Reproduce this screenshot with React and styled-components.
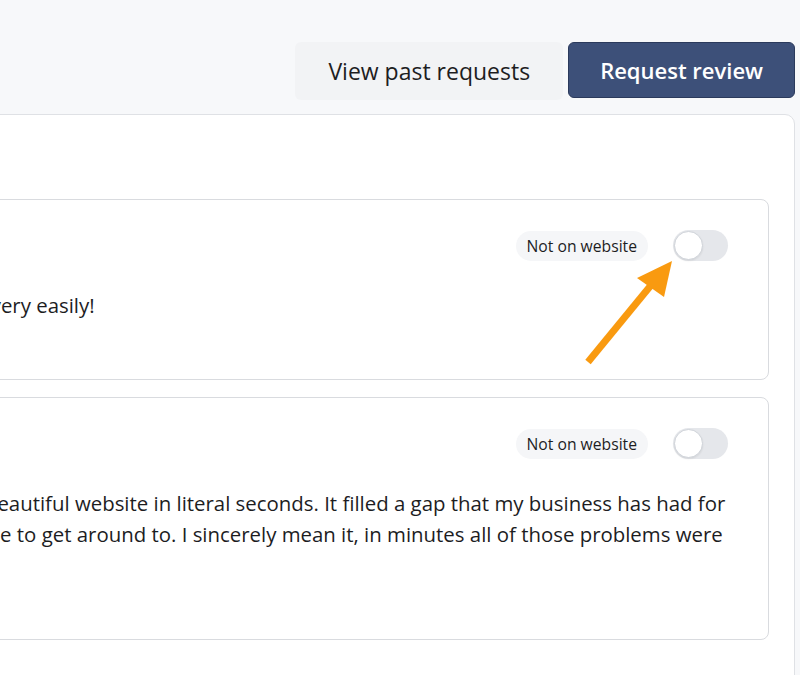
import React from "react";
import styled, { createGlobalStyle } from "styled-components";

const GlobalStyle = createGlobalStyle`
  body {
    margin: 0;
    background: #f7f8fa;
    font-family: "Open Sans", "Noto Sans", sans-serif;
    color: #1d1d1f;
    overflow: hidden;
  }
`;

const Page = styled.div`
  position: relative;
  height: 675px;
  overflow: hidden;
`;

const TopBar = styled.div`
  display: flex;
  justify-content: flex-end;
  align-items: flex-start;
  gap: 5px;
  padding: 42px 5px 14px 0;
`;

const TopButton = styled.button`
  font-family: "Open Sans", sans-serif;
  font-size: ${(props) => (props.type === "filled" ? "22px" : "23px")};
  padding: 0 ${(props) => (props.type === "filled" ? "31px" : "33px")};
  height: ${(props) => (props.type === "filled" ? "56px" : "58px")};
  border-radius: 6px;
  cursor: pointer;
  border: ${(props) =>
    props.type === "filled" ? "1px solid #2b3a5c" : "none"};
  background-color: ${(props) =>
    props.type === "filled" ? "#3d5079" : "#f2f3f5"};
  color: ${(props) => (props.type === "filled" ? "#ffffff" : "#1d1d1f")};
  font-weight: ${(props) => (props.type === "filled" ? 600 : 400)};
`;

const Panel = styled.div`
  margin-left: -212px;
  margin-right: 5px;
  min-height: 640px;
  background: #ffffff;
  border: 1px solid #dfe1e5;
  border-radius: 10px 10px 0 0;
  padding: 84px 25px 40px;
  display: flex;
  flex-direction: column;
  gap: 17px;
`;

const Card = styled.div`
  border: 1px solid #d9dbdf;
  border-radius: 8px;
  padding: 30px 40px 59px 40px;
  background: #ffffff;
`;

const CardHeader = styled.div`
  display: flex;
  justify-content: flex-end;
  align-items: center;
  gap: 25px;
  margin-bottom: 29px;
`;

const Pill = styled.span`
  display: inline-flex;
  align-items: center;
  height: 30px;
  padding: 0 11px;
  border-radius: 15px;
  background: #f5f6f8;
  font-size: 15.7px;
  color: #1d1d1f;
`;

const Track = styled.div`
  width: 55px;
  height: 31px;
  border-radius: 16px;
  background: ${(props) => (props.on ? "#3d5079" : "#e5e7eb")};
  display: flex;
  align-items: center;
  padding: 0 1px;
  box-sizing: border-box;
`;

const Knob = styled.div`
  width: 27px;
  height: 27px;
  border-radius: 50%;
  background: #ffffff;
  border: 1px solid #cfd3d9;
  box-shadow: 0 1px 2px rgba(0, 0, 0, 0.08);
`;

const ReviewText = styled.p`
  margin: 0;
  font-size: 20.4px;
  line-height: 30.4px;
  color: #1d1d1f;
`;

const Arrow = styled.svg`
  position: absolute;
  left: 0;
  top: 0;
  pointer-events: none;
`;

const reviews = [
  { id: 1, text: "He set this up very easily!" },
  {
    id: 2,
    text:
      "It made me a beautiful website in literal seconds. It filled a gap that my business has had for months, no time to get around to. I sincerely mean it, in minutes all of those problems were gone.",
  },
];

const App = () => {
  return (
    <Page>
      <GlobalStyle />
      <TopBar>
        <TopButton>View past requests</TopButton>
        <TopButton type="filled">Request review</TopButton>
      </TopBar>
      <Panel>
        {reviews.map((review) => (
          <Card key={review.id}>
            <CardHeader>
              <Pill>Not on website</Pill>
              <Track>
                <Knob />
              </Track>
            </CardHeader>
            <ReviewText>{review.text}</ReviewText>
          </Card>
        ))}
      </Panel>
      <Arrow width="800" height="675" viewBox="0 0 800 675">
        <line
          x1="588"
          y1="362"
          x2="652"
          y2="284"
          stroke="#f99a10"
          strokeWidth="7"
        />
        <polygon points="672,261 637,278 664,297" fill="#f99a10" />
      </Arrow>
    </Page>
  );
};

export default App;
